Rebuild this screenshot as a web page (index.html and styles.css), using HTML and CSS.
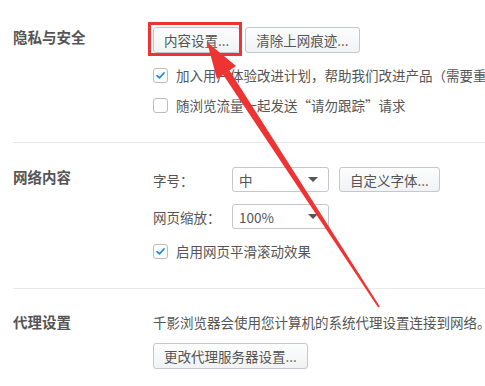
FILE: index.html
```html
<!DOCTYPE html>
<html lang="zh-CN">
<head>
    <meta charset="UTF-8">
    <title>设置</title>
    <link rel="stylesheet" href="styles.css">
</head>
<body>

    <div class="settings">
        <div class="section privacy">
            <h3>隐私与安全</h3>
            <div class="body">
                <div class="btn-row">
                    <button class="btn">内容设置...</button>
                    <button class="btn">清除上网痕迹...</button>
                </div>
                <label class="check-row">
                    <span class="box checked"><svg viewBox="0 0 15 15"><path d="M3.5 7.6 L6.3 10.3 L11.6 4.6" /></svg></span>
                    加入用户体验改进计划，帮助我们改进产品（需要重启浏览器后生效）
                </label>
                <label class="check-row">
                    <span class="box"></span>
                    随浏览流量一起发送“请勿跟踪”请求
                </label>
            </div>
        </div>

        <div class="section content">
            <h3>网络内容</h3>
            <div class="body">
                <div class="field-row">
                    <span class="field-label">字号：</span>
                    <div class="select"><span>中</span><i class="caret"></i></div>
                    <button class="btn">自定义字体...</button>
                </div>
                <div class="field-row">
                    <span class="field-label">网页缩放：</span>
                    <div class="select"><span>100%</span><i class="caret"></i></div>
                </div>
                <label class="check-row">
                    <span class="box checked"><svg viewBox="0 0 15 15"><path d="M3.5 7.6 L6.3 10.3 L11.6 4.6" /></svg></span>
                    启用网页平滑滚动效果
                </label>
            </div>
        </div>

        <div class="section proxy">
            <h3>代理设置</h3>
            <div class="body">
                <p class="note">千影浏览器会使用您计算机的系统代理设置连接到网络。</p>
                <button class="btn">更改代理服务器设置...</button>
            </div>
        </div>
    </div>

    <!-- annotation overlay -->
    <div class="mark-box"></div>
    <svg class="mark-arrow" width="485" height="386" viewBox="0 0 485 386">
        <polygon points="207,42 236,66 217,79" />
        <polygon points="229.5,70.5 223,74.5 378.2,307.5 379.8,306.5" />
    </svg>

</body>
</html>
```

FILE: styles.css
```css
body { margin: 0; background: #fff; font-family: "Noto Sans CJK SC", "Noto Sans", sans-serif; color: #555; font-size: 13.5px; overflow: hidden; width: 485px; height: 386px; position: relative; }
.settings { padding-left: 13px; }
.section { display: grid; grid-template-columns: 140px 1fr; border-bottom: 1px solid #e8e8e8; white-space: nowrap; }
.section:last-child { border-bottom: none; }
.section h3 { margin: 0; font-size: 14.5px; font-weight: bold; color: #555; line-height: 20px; }
.privacy { padding: 27px 0 22px; }
.content { padding: 24px 0 22px; }
.proxy { padding: 23px 0 0; }
.body { min-width: 0; }
.btn-row { display: flex; gap: 5px; margin-bottom: 7px; }
.btn { height: 26px; padding: 0 10px; font-family: inherit; font-size: 13.5px; color: #555; background: linear-gradient(#fdfdfd, #f1f2f4); border: 1px solid #c4c7cc; border-radius: 3px; box-sizing: border-box; line-height: 24px; }
.check-row { display: flex; align-items: center; gap: 8px; height: 30px; line-height: 30px; }
.box { width: 15px; height: 15px; box-sizing: border-box; border: 1px solid #b9bcc1; border-radius: 3px; background: #fff; flex: none; display: flex; }
.box svg { width: 13px; height: 13px; }
.box path { fill: none; stroke: #1e88e5; stroke-width: 2; stroke-linecap: round; stroke-linejoin: round; }
.field-row { display: flex; align-items: center; height: 25px; margin-bottom: 12px; }
.field-label { width: 79px; flex: none; }
.select { width: 97px; height: 25px; box-sizing: border-box; border: 1px solid #c4c7cc; border-radius: 3px; background: #fff; display: flex; align-items: center; justify-content: space-between; padding: 0 10px 0 6px; margin-right: 10px; }
.field-row .btn { height: 25px; }
.caret { width: 0; height: 0; border-left: 5px solid transparent; border-right: 5px solid transparent; border-top: 5px solid #555; }
.field-row + .check-row { margin-top: -5px; }
.note { margin: 0 0 11px; line-height: 20px; }
.mark-box { position: absolute; left: 148px; top: 22px; width: 94px; height: 34px; box-sizing: border-box; border: 3px solid #ee3333; }
.mark-arrow { position: absolute; left: 0; top: 0; pointer-events: none; }
.mark-arrow polygon { fill: #ee3333; }
```
